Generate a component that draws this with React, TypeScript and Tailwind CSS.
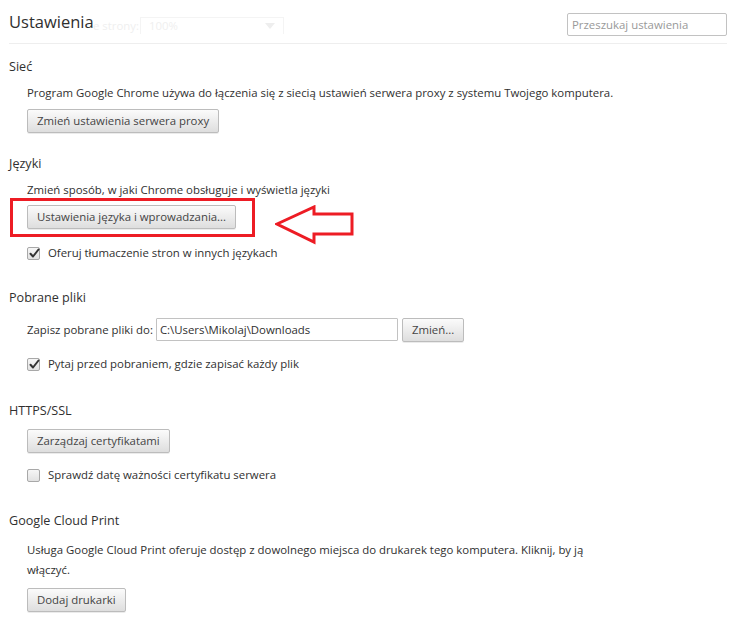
import React from "react";

const font = { fontFamily: '"Open Sans", "Noto Sans", sans-serif' };

function Btn({ children, className = "" }: { children: React.ReactNode; className?: string }) {
  return (
    <button
      className={`h-[24px] px-[9px] rounded-[2px] border border-[#bcbcbc] bg-gradient-to-b from-[#fbfbfb] to-[#dedede] text-[11.4px] text-[#444] leading-none shadow-[0_1px_0_rgba(0,0,0,0.08)] ${className}`}
      style={font}
    >
      {children}
    </button>
  );
}

function Check({ checked, label }: { checked: boolean; label: string }) {
  return (
    <div className="flex items-center h-[20px] pl-[18px]">
      <span className="relative w-[13px] h-[13px] rounded-[2px] border border-[#a8a8a8] bg-gradient-to-b from-[#f6f6f6] to-[#e2e2e2] flex items-center justify-center">
        {checked && (
          <svg width="11" height="11" viewBox="0 0 11 11" className="absolute left-[1px] top-[0px]">
            <path d="M1.5 5.8 L4 8.5 L9.5 1.5" fill="none" stroke="#333" strokeWidth="2" strokeLinecap="round" strokeLinejoin="round" />
          </svg>
        )}
      </span>
      <span className="ml-[8px] text-[11.4px] text-[#303030]">{label}</span>
    </div>
  );
}

function H({ children, className = "" }: { children: React.ReactNode; className?: string }) {
  return <div className={`h-[20px] leading-[20px] text-[12.6px] text-[#303030] ${className}`}>{children}</div>;
}

function P({ children, className = "" }: { children: React.ReactNode; className?: string }) {
  return <div className={`pl-[18px] leading-[20px] text-[11.4px] text-[#303030] ${className}`}>{children}</div>;
}

export default function App() {
  return (
    <div className="w-[748px] h-[622px] bg-white overflow-hidden" style={font}>
      <div className="pl-[9px] w-[727px]">
        {/* header */}
        <div className="relative h-[44px] flex items-start justify-between border-b border-[#eeeeee]">
          {/* faded ghost zoom control */}
          <div className="absolute left-[84px] top-[17px] flex items-center text-[11.4px] text-[#efefef]">
            <span>e strony:</span>
            <div className="ml-[1px] w-[144px] h-[17px] border border-[#f4f4f4] border-b-0 relative pl-[8px] leading-[16px]">
              100%
              <span className="absolute right-[8px] top-[5px] w-0 h-0 border-l-[5px] border-r-[5px] border-t-[6px] border-l-transparent border-r-transparent border-t-[#eeeeee]" />
            </div>
          </div>
          <div className="mt-[10px] text-[16.5px] leading-[24px] text-[#303030] relative z-10">Ustawienia</div>
          <input
            placeholder="Przeszukaj ustawienia"
            className="mt-[13px] w-[160px] h-[23px] border border-[#c2c2c2] rounded-[2px] px-[4px] text-[11.4px] text-[#333] placeholder:text-[#999] outline-none"
            style={font}
          />
        </div>

        {/* Sieć */}
        <H className="mt-[13px]">Sieć</H>
        <P className="mt-[6px]">Program Google Chrome używa do łączenia się z siecią ustawień serwera proxy z systemu Twojego komputera.</P>
        <div className="pl-[18px] mt-[6px] flex">
          <Btn>Zmień ustawienia serwera proxy</Btn>
        </div>

        {/* Języki */}
        <div className="relative">
          <H className="mt-[21px]">Języki</H>
          <P className="mt-[6px]">Zmień sposób, w jaki Chrome obsługuje i wyświetla języki</P>
          <div className="pl-[18px] mt-[5px] flex">
            <Btn>Ustawienia języka i wprowadzania...</Btn>
          </div>
          <div className="mt-[14px]">
            <Check checked label="Oferuj tłumaczenie stron w innych językach" />
          </div>
          {/* red highlight box */}
          <div className="absolute left-[1px] top-[44px] w-[245px] h-[39px] border-[3px] border-[#ed1c24] pointer-events-none" />
          {/* arrow */}
          <svg className="absolute left-[266px] top-[51px]" width="80" height="40" viewBox="0 0 80 40">
            <polygon points="2,19 39,2 39,9 77,9 77,29 39,29 39,37" fill="none" stroke="#ed1c24" strokeWidth="3" strokeLinejoin="miter" />
          </svg>
        </div>

        {/* Pobrane pliki */}
        <H className="mt-[25px]">Pobrane pliki</H>
        <div className="pl-[18px] mt-[10px] flex items-center h-[23px]">
          <span className="text-[11.4px] text-[#303030]">Zapisz pobrane pliki do:</span>
          <div className="ml-[3px] w-[242px] h-[23px] border border-[#c2c2c2] rounded-[1px] flex items-center px-[3px] text-[11.4px] text-[#303030]">
            C:\Users\Mikolaj\Downloads
          </div>
          <Btn className="ml-[4px] h-[23px] px-[8px]">Zmień...</Btn>
        </div>
        <div className="mt-[13px]">
          <Check checked label="Pytaj przed pobraniem, gdzie zapisać każdy plik" />
        </div>

        {/* HTTPS/SSL */}
        <H className="mt-[27px]">HTTPS/SSL</H>
        <div className="pl-[18px] mt-[8px] flex">
          <Btn>Zarządzaj certyfikatami</Btn>
        </div>
        <div className="mt-[12px]">
          <Check checked={false} label="Sprawdź datę ważności certyfikatu serwera" />
        </div>

        {/* Google Cloud Print */}
        <H className="mt-[26px]">Google Cloud Print</H>
        <P className="mt-[9px] w-[600px]">
          Usługa Google Cloud Print oferuje dostęp z dowolnego miejsca do drukarek tego komputera. Kliknij, by ją włączyć.
        </P>
        <div className="pl-[18px] mt-[8px] flex">
          <Btn>Dodaj drukarki</Btn>
        </div>
      </div>
    </div>
  );
}
